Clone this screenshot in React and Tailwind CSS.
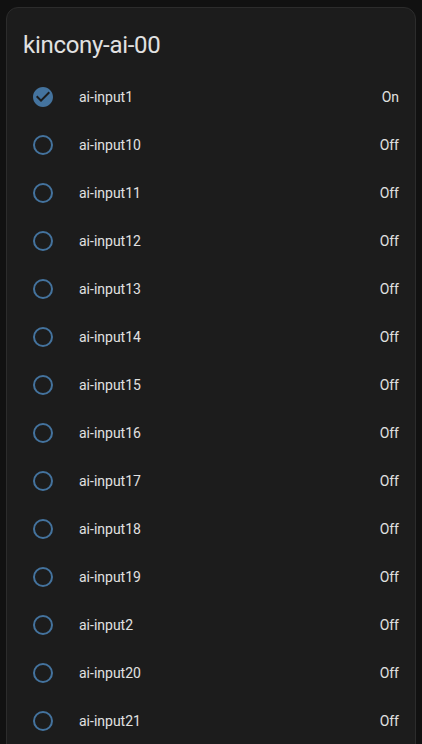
import React from "react";

const names = [
  "ai-input1","ai-input10","ai-input11","ai-input12","ai-input13","ai-input14","ai-input15",
  "ai-input16","ai-input17","ai-input18","ai-input19","ai-input2","ai-input20","ai-input21",
  "ai-input22","ai-input23","ai-input24",
];

function Checked() {
  return (
    <svg viewBox="0 0 24 24" className="w-6 h-6" fill="#44739e">
      <path d="M12 2C6.5 2 2 6.5 2 12S6.5 22 12 22 22 17.5 22 12 17.5 2 12 2M10 17L5 12L6.41 10.59L10 14.17L17.59 6.58L19 8L10 17Z" />
    </svg>
  );
}
function Blank() {
  return (
    <svg viewBox="0 0 24 24" className="w-6 h-6" fill="#44739e">
      <path d="M12,20A8,8 0 0,1 4,12A8,8 0 0,1 12,4A8,8 0 0,1 20,12A8,8 0 0,1 12,20M12,2A10,10 0 0,0 2,12A10,10 0 0,0 12,22A10,10 0 0,0 22,12A10,10 0 0,0 12,2Z" />
    </svg>
  );
}

export default function App() {
  return (
    <div className="min-h-screen bg-[#111111] pt-[7px] px-[6px] pb-2" style={{ fontFamily: "Roboto, 'Noto Sans', sans-serif" }}>
      <div className="rounded-xl border border-[#2c2c2c] bg-[#1c1c1c] text-[#e1e1e1]">
        <div className="px-4 pt-[21px] pb-[16px] text-[24px] leading-[32px] tracking-[-0.012em]">kincony-ai-00</div>
        <div className="px-4 pb-4 flex flex-col gap-2">
          {names.map((n, i) => (
            <div key={n} className="flex items-center h-10">
              <div className="w-10 h-10 flex items-center justify-center shrink-0">
                {i === 0 ? <Checked /> : <Blank />}
              </div>
              <div className="ml-4 flex-1 text-[14px]">{n}</div>
              <div className="text-[14px]">{i === 0 ? "On" : "Off"}</div>
            </div>
          ))}
        </div>
      </div>
    </div>
  );
}
